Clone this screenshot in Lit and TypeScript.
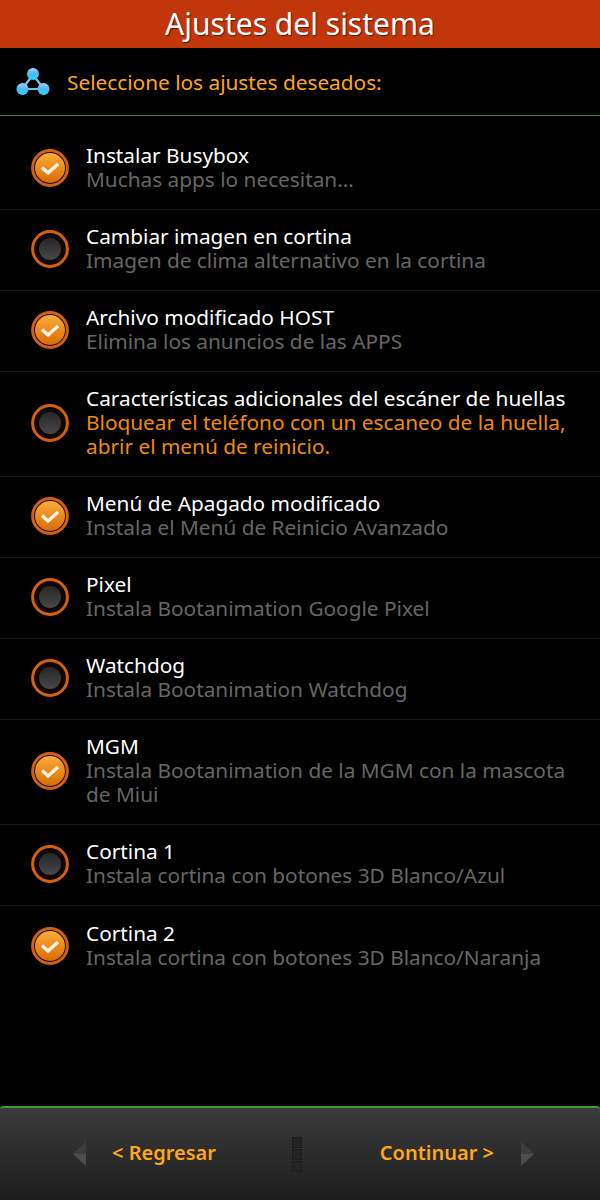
import { LitElement, html, css, svg } from 'lit';
import { customElement } from 'lit/decorators.js';

interface Opcion {
  titulo: string;
  detalle: string;
  marcado: boolean;
  aviso?: boolean;
}

const opciones: Opcion[] = [
  { titulo: 'Instalar Busybox', detalle: 'Muchas apps lo necesitan...', marcado: true },
  { titulo: 'Cambiar imagen en cortina', detalle: 'Imagen de clima alternativo en la cortina', marcado: false },
  { titulo: 'Archivo modificado HOST', detalle: 'Elimina los anuncios de las APPS', marcado: true },
  {
    titulo: 'Características adicionales del escáner de huellas',
    detalle: 'Bloquear el teléfono con un escaneo de la huella, abrir el menú de reinicio.',
    marcado: false,
    aviso: true,
  },
  { titulo: 'Menú de Apagado modificado', detalle: 'Instala el Menú de Reinicio Avanzado', marcado: true },
  { titulo: 'Pixel', detalle: 'Instala Bootanimation Google Pixel', marcado: false },
  { titulo: 'Watchdog', detalle: 'Instala Bootanimation Watchdog', marcado: false },
  { titulo: 'MGM', detalle: 'Instala Bootanimation de la MGM con la mascota de Miui', marcado: true },
  { titulo: 'Cortina 1', detalle: 'Instala cortina con botones 3D Blanco/Azul', marcado: false },
  { titulo: 'Cortina 2', detalle: 'Instala cortina con botones 3D Blanco/Naranja', marcado: true },
];

const logo = html`<svg class="logo" viewBox="0 0 34 30" width="34" height="30">
  <defs>
    <linearGradient id="bola" x1="0" y1="0" x2="0" y2="1">
      <stop offset="0" stop-color="#a5d4f5" />
      <stop offset="0.45" stop-color="#5cb4ee" />
      <stop offset="0.55" stop-color="#3cc0f8" />
      <stop offset="1" stop-color="#2cd4ff" />
    </linearGradient>
  </defs>
  <path d="M17 8 L6 22 H28 Z" fill="none" stroke="#7fc0ea" stroke-width="2.2" />
  <circle cx="17" cy="7" r="6" fill="url(#bola)" />
  <circle cx="6.5" cy="22" r="6" fill="url(#bola)" />
  <circle cx="27.5" cy="22" r="6" fill="url(#bola)" />
</svg>`;

const radio = (marcado: boolean) => html`<svg class="radio" viewBox="0 0 38 38" width="38" height="38">
  <defs>
    <linearGradient id="naranja" x1="0" y1="0" x2="0" y2="1">
      <stop offset="0" stop-color="#fbac38" />
      <stop offset="1" stop-color="#d96c08" />
    </linearGradient>
    <linearGradient id="gris" x1="0" y1="0" x2="0" y2="1">
      <stop offset="0" stop-color="#262626" />
      <stop offset="1" stop-color="#484848" />
    </linearGradient>
  </defs>
  <circle cx="19" cy="19" r="17.4" fill="#0d0805" stroke="#d4610a" stroke-width="3" />
  ${marcado
    ? svg`<circle cx="19" cy="19" r="15" fill="url(#naranja)" />
        <path d="M11 18.5 L17 24 L27 15" fill="none" stroke="#fff3e0" stroke-width="3.4" />`
    : svg`<circle cx="19" cy="19" r="11" fill="url(#gris)" />`}
</svg>`;

@customElement('app-root')
export class AppRoot extends LitElement {
  static styles = css`
    :host {
      display: flex;
      flex-direction: column;
      width: 600px;
      height: 1200px;
      background: #000;
      font-family: 'Noto Sans', 'Open Sans', sans-serif;
      overflow: hidden;
    }

    .titulo {
      height: 48px;
      background: #c2360b;
      color: #fff;
      font-size: 30px;
      line-height: 48px;
      text-align: center;
      flex: none;
      text-shadow: 1px 1px 1px #5a1a05;
    }

    .cabecera {
      height: 67px;
      flex: none;
      display: flex;
      align-items: center;
      gap: 17px;
      padding-left: 16px;
      border-bottom: 1px solid #26901a;
      color: #ffa61d;
      font-size: 20.8px;
    }

    .logo {
      flex: none;
    }

    .lista {
      flex: 1;
      padding-top: 13px;
    }

    .fila {
      display: flex;
      align-items: center;
      box-sizing: border-box;
      min-height: 81px;
      padding: 14px 0 18px 31px;
      border-bottom: 1px solid #161616;
    }

    .fila:last-child {
      border-bottom: none;
    }

    .radio {
      flex: none;
      margin: 2px 17px 0 0;
    }

    .textos {
      flex: 1;
      min-width: 0;
      padding-right: 20px;
      font-size: 20.8px;
      line-height: 24px;
    }

    .nombre {
      color: #fff;
    }

    .detalle {
      color: #666;
    }

    .detalle.aviso {
      color: #f08a0e;
    }

    .pie {
      height: 94px;
      flex: none;
      box-sizing: border-box;
      border-top: 2px solid #3a9a30;
      border-radius: 3px 3px 0 0;
      background: linear-gradient(#3b3b3d, #1d1d1d);
      display: flex;
      align-items: center;
      color: #ffa61d;
      font-size: 20px;
      font-weight: 600;
    }

    .pie .texto {
      margin-top: -3px;
    }

    .lado {
      display: flex;
      align-items: center;
    }

    .lado.izq {
      flex: none;
      width: 292px;
      box-sizing: border-box;
      padding-left: 73px;
      gap: 26px;
    }

    .lado.der {
      flex: 1;
      justify-content: flex-end;
      padding-right: 66px;
      gap: 27px;
    }

    .flecha {
      flex: none;
    }

    .asa {
      flex: none;
      display: flex;
      flex-direction: column;
      gap: 1px;
      width: 10px;
    }

    .asa span {
      height: 9px;
      background: #242424;
      border: 1px solid #1c1c1c;
    }
  `;

  render() {
    return html`
      <div class="titulo">Ajustes del sistema</div>
      <div class="cabecera">${logo}<span>Seleccione los ajustes deseados:</span></div>
      <div class="lista">
        ${opciones.map(
          (o) => html`<div class="fila">
            ${radio(o.marcado)}
            <div class="textos">
              <div class="nombre">${o.titulo}</div>
              <div class="detalle ${o.aviso ? 'aviso' : ''}">${o.detalle}</div>
            </div>
          </div>`
        )}
      </div>
      <div class="pie">
        <div class="lado izq">
          <svg class="flecha" viewBox="0 0 13 24" width="13" height="24">
            <path d="M13 0 L0 12 L13 24 Z" fill="#4c4e4e" />
            <path d="M13 0 L0 12 H13 Z" fill="#3c3e3e" />
          </svg>
          <span class="texto">&lt; Regresar</span>
        </div>
        <div class="asa"><span></span><span></span><span></span></div>
        <div class="lado der">
          <span class="texto">Continuar &gt;</span>
          <svg class="flecha" viewBox="0 0 13 24" width="13" height="24">
            <path d="M0 0 L13 12 L0 24 Z" fill="#4c4e4e" />
            <path d="M0 0 L13 12 H0 Z" fill="#3c3e3e" />
          </svg>
        </div>
      </div>
    `;
  }
}
